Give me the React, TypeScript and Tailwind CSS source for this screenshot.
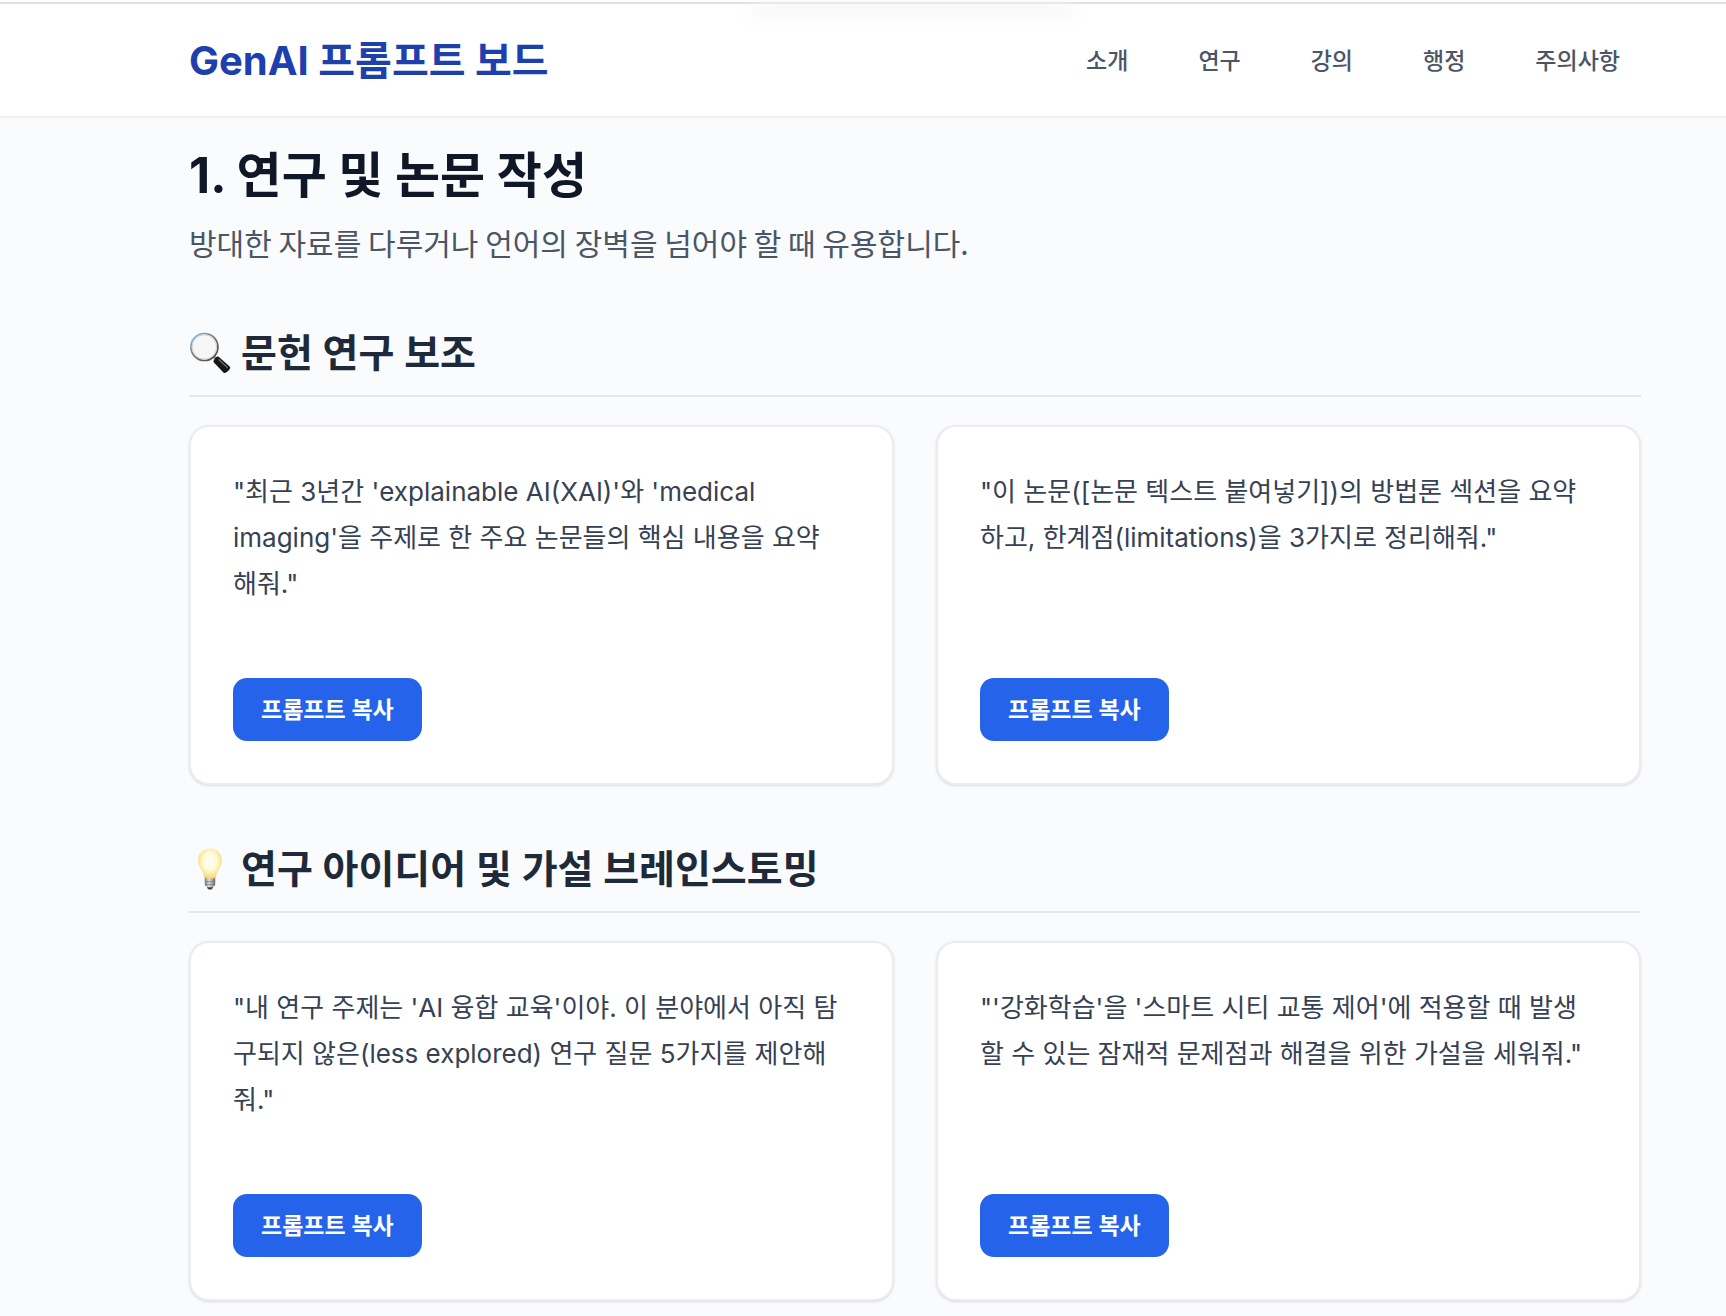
import { useState, type ReactNode } from "react";

const navItems = [
  { href: "#intro", label: "소개" },
  { href: "#research", label: "연구" },
  { href: "#teaching", label: "강의" },
  { href: "#admin", label: "행정" },
  { href: "#caution", label: "주의사항" },
];

const groups = [
  {
    id: "literature",
    icon: <MagnifierIcon />,
    title: "문헌 연구 보조",
    prompts: [
      "\"최근 3년간 'explainable AI(XAI)'와 'medical imaging'을 주제로 한 주요 논문들의 핵심 내용을 요약해줘.\"",
      "\"이 논문([논문 텍스트 붙여넣기])의 방법론 섹션을 요약하고, 한계점(limitations)을 3가지로 정리해줘.\"",
    ],
  },
  {
    id: "ideas",
    icon: <BulbIcon />,
    title: "연구 아이디어 및 가설 브레인스토밍",
    prompts: [
      "\"내 연구 주제는 'AI 융합 교육'이야. 이 분야에서 아직 탐구되지 않은(less explored) 연구 질문 5가지를 제안해줘.\"",
      "\"'강화학습'을 '스마트 시티 교통 제어'에 적용할 때 발생할 수 있는 잠재적 문제점과 해결을 위한 가설을 세워줘.\"",
    ],
  },
];

function MagnifierIcon() {
  return (
    <svg viewBox="0 0 44 44" className="size-11 shrink-0" aria-hidden="true">
      <defs>
        <linearGradient id="rim" x1="0" y1="0" x2="1" y2="1">
          <stop offset="0.1" stopColor="#7db9ea" />
          <stop offset="0.35" stopColor="#85898d" />
          <stop offset="1" stopColor="#3f3f3f" />
        </linearGradient>
      </defs>
      <path d="M24.5 25.5l3.5 3.5" stroke="#8a8a8a" strokeWidth="3" />
      <path d="M29.6 25.8l10.8 9.4c1 .9 1.100 1.700.4 2.700-1 1.500-2.200 2.700-3.700 3.700-1 .7-1.900.6-2.700-.2l-9.300-9.700c-.8-.8-.9-1.700-.2-2.600l2.300-2.900c.7-.9 1.500-1.100 2.400-.4z" fill="#151515" />
      <path d="M30 28.800l8.200 7.400" stroke="#6e6e6e" strokeWidth="1.4" strokeLinecap="round" />
      <circle cx="15.4" cy="16" r="13.5" fill="#f6f6f7" stroke="url(#rim)" strokeWidth="1.7" />
      <circle cx="15.4" cy="16" r="12.2" fill="none" stroke="#cfcfd1" strokeWidth="0.9" />
    </svg>
  );
}

function BulbIcon() {
  return (
    <svg viewBox="0 0 44 44" className="size-11 shrink-0" aria-hidden="true">
      <defs>
        <radialGradient id="glow" cx="0.5" cy="0.42" r="0.58">
          <stop offset="0" stopColor="#fffef6" />
          <stop offset="0.5" stopColor="#fffad8" />
          <stop offset="0.8" stopColor="#fbe595" />
          <stop offset="1" stopColor="#f2cf72" />
        </radialGradient>
        <linearGradient id="base" x1="0" y1="0" x2="1" y2="0">
          <stop offset="0" stopColor="#777" />
          <stop offset="0.4" stopColor="#e2e2e2" />
          <stop offset="1" stopColor="#6b6b6b" />
        </linearGradient>
      </defs>
      <path d="M21 1.5c-7 0-12 5-12 12 0 4.5 2.2 7.5 4 10.5 1.4 2.4 1.8 4.5 2.2 6.5.2 1 .8 1.4 1.700 1.400h8.200c.9 0 1.500-.4 1.700-1.400.4-2 .8-4.100 2.200-6.500 1.800-3 4-6 4-10.500 0-7-5-12-12-12z" fill="url(#glow)" />
      <path d="M15.8 31c3 1 7.4 1 10.4 0v6.4c0 1-.6 1.5-1.5 1.9l-1.5 2.4c-.9 1.1-3.5 1.1-4.4 0l-1.5-2.4c-.9-.4-1.5-.9-1.5-1.9z" fill="url(#base)" />
      <path d="M15.8 34.2c3 1 7.4.8 10.4-.4M16 37c3 1 7.2.8 10-.4" fill="none" stroke="#777" strokeWidth="0.8" />
      <path d="M18 40.2h6l-1 1.7c-.9.9-3.1.9-4 0z" fill="#444" />
    </svg>
  );
}

function PromptCard({ text }: { text: string }) {
  const [copied, setCopied] = useState(false);

  const copy = async () => {
    await navigator.clipboard.writeText(text);
    setCopied(true);
    setTimeout(() => setCopied(false), 2000);
  };

  return (
    <article className="flex flex-col items-start justify-between rounded-[20px] border-2 border-gray-200/80 bg-white p-[42px] shadow-sm">
      <p className="mb-[71px] pr-[10px] text-[26px] leading-[46px] text-gray-700">{text}</p>
      <button type="button" onClick={copy} className="h-[63px] rounded-[14px] bg-[#2563eb] px-7 pt-[2px] text-[23px] font-semibold text-white">
        {copied ? "복사 완료!" : "프롬프트 복사"}
      </button>
    </article>
  );
}

function PromptGroup({ id, icon, title, prompts }: { id: string; icon: ReactNode; title: string; prompts: string[] }) {
  return (
    <section id={id}>
      <h3 className="mb-7 flex items-center gap-2 border-b-2 border-gray-200 pb-[14px] text-[39px] leading-[56px] font-semibold text-gray-800">
        {icon}
        {title}
      </h3>
      <div className="grid grid-cols-2 gap-[42px]">
        {prompts.map((prompt) => (
          <PromptCard key={prompt} text={prompt} />
        ))}
      </div>
    </section>
  );
}

export default function App() {
  return (
    <div className="min-h-screen bg-[#f9fbfd] font-[Inter,'Noto_Sans_CJK_KR',sans-serif]">
      <header className="relative overflow-hidden border-b-2 border-gray-200/60 bg-white pt-[2px]">
        <div className="border-t-2 border-[#e0e0e0]" />
        <div className="absolute top-1 left-1/2 h-3 w-80 -translate-x-[110px] bg-neutral-100 blur-sm" />
        <div className="flex h-28 items-center justify-between pt-[2px] pr-[85px] pl-[189px]">
          <a href="#top" className="text-[40px] font-bold text-[#1e40af]">
            GenAI 프롬프트 보드
          </a>
          <nav className="flex items-center gap-7">
            {navItems.map((item) => (
              <a key={item.href} href={item.href} className="px-[21px] text-[23px] font-medium text-gray-600">
                {item.label}
              </a>
            ))}
          </nav>
        </div>
      </header>

      <main className="pt-7 pr-[85px] pb-3 pl-[189px]">
        <h2 className="text-[49px] leading-[60px] font-bold text-gray-900">1. 연구 및 논문 작성</h2>
        <p className="mt-3 mb-[59px] font-['Noto_Sans_CJK_KR',sans-serif] text-[30px] leading-[48px] text-gray-600">
          방대한 자료를 다루거나 언어의 장벽을 넘어야 할 때 유용합니다.
        </p>
        <div className="flex flex-col gap-14">
          {groups.map((group) => (
            <PromptGroup key={group.id} {...group} />
          ))}
        </div>
      </main>
    </div>
  );
}
